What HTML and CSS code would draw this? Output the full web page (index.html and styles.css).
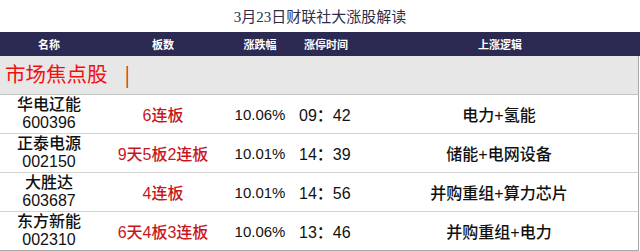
FILE: index.html
```html
<!DOCTYPE html>
<html lang="zh">
<head>
<meta charset="utf-8">
<link rel="stylesheet" href="styles.css">
</head>
<body>
<div class="page">
  <div class="title">3月23日财联社大涨股解读</div>
  <div class="head row-grid">
    <div>名称</div>
    <div>板数</div>
    <div>涨跌幅</div>
    <div>涨停时间</div>
    <div>上涨逻辑</div>
  </div>
  <div class="section">市场焦点股 <span class="bar">|</span></div>
  <div class="row row-grid">
    <div class="name"><div>华电辽能</div><div>600396</div></div>
    <div class="boards">6连板</div>
    <div class="pct">10.06%</div>
    <div class="time">09：42</div>
    <div class="logic">电力+氢能</div>
  </div>
  <div class="row row-grid">
    <div class="name"><div>正泰电源</div><div>002150</div></div>
    <div class="boards">9天5板2连板</div>
    <div class="pct">10.01%</div>
    <div class="time">14：39</div>
    <div class="logic">储能+电网设备</div>
  </div>
  <div class="row row-grid">
    <div class="name"><div>大胜达</div><div>603687</div></div>
    <div class="boards">4连板</div>
    <div class="pct">10.01%</div>
    <div class="time">14：56</div>
    <div class="logic">并购重组+算力芯片</div>
  </div>
  <div class="row row-grid">
    <div class="name"><div>东方新能</div><div>002310</div></div>
    <div class="boards">6天4板3连板</div>
    <div class="pct">10.06%</div>
    <div class="time">13：46</div>
    <div class="logic">并购重组+电力</div>
  </div>
</div>
</body>
</html>
```
FILE: styles.css
```css
html, body {
  margin: 0;
  padding: 0;
  background: #ffffff;
}
.page {
  width: 640px;
  font-family: "Liberation Sans", "Noto Sans CJK SC", sans-serif;
  color: #111111;
}
.title {
  height: 32px;
  line-height: 34px;
  text-align: center;
  font-family: "Liberation Serif", "Noto Sans CJK SC", serif;
  font-size: 15px;
  color: #2e2e48;
}
.row-grid {
  display: grid;
  grid-template-columns: 98px 130px 64px 68px 1fr;
  align-items: center;
  text-align: center;
}
.head {
  height: 24px;
  background: #2c2a52;
  color: #ffffff;
  font-size: 11px;
  font-weight: bold;
}
.section {
  width: 633px;
  height: 38px;
  line-height: 38px;
  padding-left: 5px;
  background: #e7e7e7;
  border-right: 1px solid #a8a8a8;
  border-bottom: 1px solid #c4c4c4;
  color: #f01010;
  font-family: "Liberation Serif", "Noto Sans CJK SC", serif;
  font-size: 20.5px;
  overflow: hidden;
}
.section .bar {
  margin-left: 12px;
  font-size: 25px;
  vertical-align: top;
}
.row {
  width: 638px;
  height: 38px;
  border-right: 1px solid #a8a8a8;
  border-bottom: 1px solid #d2d2d2;
  font-size: 16px;
  font-weight: 500;
}
.name {
  line-height: 18px;
}
.boards {
  color: #c8161d;
}
.pct {
  font-size: 15px;
}
.time {
  text-align: left;
  padding-left: 7px;
}
.row:last-child {
  border-bottom-color: #a8a8a8;
}
```
